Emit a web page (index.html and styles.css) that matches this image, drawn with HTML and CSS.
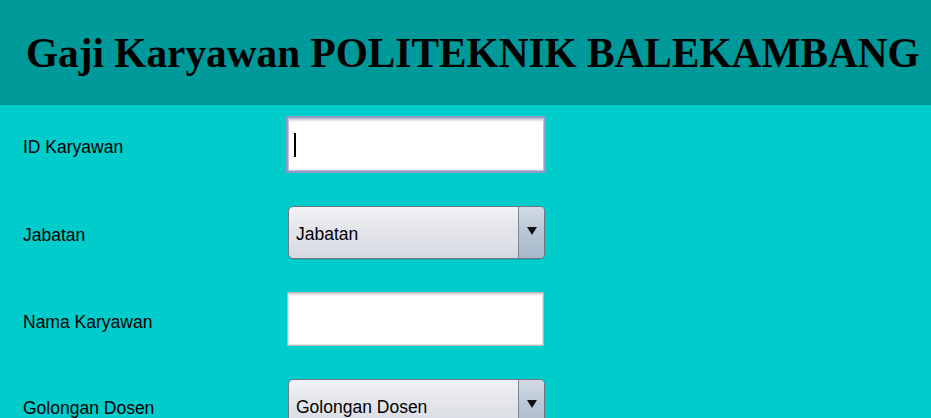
FILE: index.html
```html
<!DOCTYPE html>
<html lang="id">
<head>
<meta charset="utf-8">
<title>Gaji Karyawan POLITEKNIK BALEKAMBANG</title>
<link rel="stylesheet" href="styles.css">
</head>
<body>
<header class="header">
  <h1 class="title">Gaji Karyawan POLITEKNIK BALEKAMBANG</h1>
</header>
<main class="form">
  <label class="label">ID Karyawan</label>
  <div class="field field-focused"><span class="caret"></span></div>

  <label class="label">Jabatan</label>
  <div class="combo"><span class="combo-text">Jabatan</span><span class="combo-btn"><span class="arrow"></span></span></div>

  <label class="label">Nama Karyawan</label>
  <div class="field"></div>

  <label class="label">Golongan Dosen</label>
  <div class="combo"><span class="combo-text">Golongan Dosen</span><span class="combo-btn"><span class="arrow"></span></span></div>
</main>
</body>
</html>
```

FILE: styles.css
```css
html, body {
  margin: 0;
  padding: 0;
}
body {
  background: #00cccc;
  width: 931px;
  height: 418px;
  overflow: hidden;
  font-family: "Liberation Sans", Arial, sans-serif;
  color: #000;
}
.header {
  background: #009999;
  height: 105px;
  display: flex;
  align-items: center;
  padding-left: 26px;
  box-sizing: border-box;
}
.title {
  margin: 0;
  font-family: "Liberation Serif", "Times New Roman", serif;
  font-weight: bold;
  font-size: 41.3px;
  line-height: 1;
  white-space: nowrap;
  color: #000;
  padding-top: 2px;
}
.form {
  display: grid;
  grid-template-columns: 264px 258px;
  grid-auto-rows: auto;
  row-gap: 33px;
  align-items: center;
  padding: 11px 0 0 23px;
}
.label {
  font-size: 17.5px;
  padding-top: 6px;
}
.field {
  box-sizing: border-box;
  height: 54px;
  width: 257px;
  background: #fff;
  border: 1px solid #b9b9b9;
  box-shadow: inset 0 1px 0 #d4d4d4, inset 0 2px 0 #e8e8e8, inset 0 3px 0 #f4f4f4, inset 1px 0 0 #e4e4e4, inset -1px 0 0 #e4e4e4, inset 0 -1px 0 #e4e4e4;
}
.field-focused {
  height: 57px;
  width: 260px;
  margin-left: -1px;
  border: 2px solid #8b9dc6;
  box-shadow: inset 0 0 0 1px #b9c3dc, inset 0 2px 0 #d2d2d2, inset 0 3px 0 #e6e6e6, inset 0 4px 0 #f3f3f3;
  display: flex;
  align-items: center;
  padding-left: 6px;
}
.caret {
  display: block;
  width: 1.5px;
  height: 24px;
  background: #000;
  margin-top: 0;
}
.combo {
  box-sizing: border-box;
  height: 53px;
  width: 257px;
  margin-left: 1px;
  border: 1px solid #6f7785;
  border-radius: 5px;
  background: linear-gradient(#f1f2f5, #e3e5ea 45%, #d6d9e1);
  box-shadow: 0 1px 0 rgba(0,0,0,0.12);
  display: flex;
  align-items: stretch;
  overflow: hidden;
}
.combo-text {
  flex: 1;
  display: flex;
  align-items: center;
  padding-left: 7px;
  font-size: 17.5px;
  padding-top: 4px;
}
.combo-btn {
  width: 25px;
  border-left: 1px solid #7d8694;
  background: linear-gradient(#d3dbe4, #b7c5d4 50%, #a9b9cb);
  display: flex;
  align-items: center;
  justify-content: center;
}
.arrow {
  width: 0;
  height: 0;
  border-left: 5px solid transparent;
  border-right: 5px solid transparent;
  border-top: 8px solid #111;
  margin-top: -4px;
}
```
